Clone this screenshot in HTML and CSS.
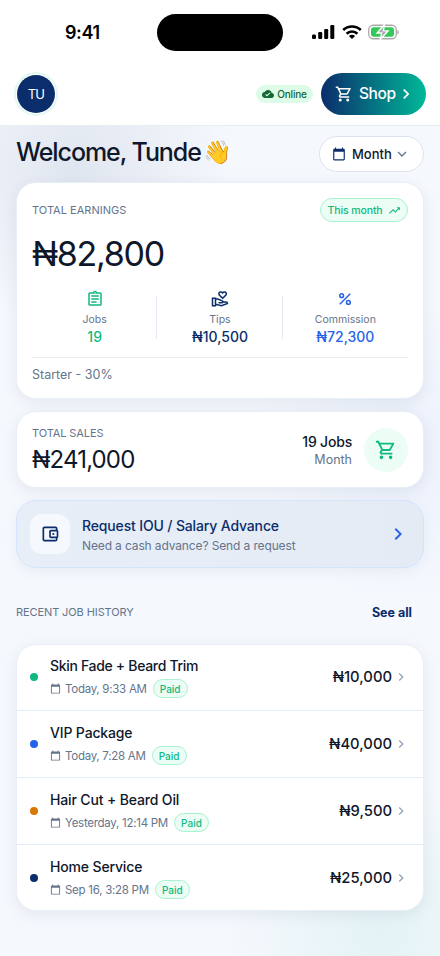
FILE: index.html
```html
<!DOCTYPE html>
<html lang="en">
<head>
<meta charset="utf-8">
<title>Dashboard</title>
<link rel="stylesheet" href="styles.css">
</head>
<body>
<svg class="defs" width="0" height="0" aria-hidden="true">
  <symbol id="cart" viewBox="0 0 24 24"><path fill="currentColor" d="M15.55 13c.75 0 1.41-.41 1.75-1.03l3.58-6.49A1 1 0 0 0 20.01 4H5.21l-.94-2H1v2h2l3.6 7.59-1.35 2.44C4.52 15.37 5.48 17 7 17h12v-2H7l1.1-2h7.45zM6.16 6h12.15l-2.76 5H8.53L6.16 6zM7 18a2 2 0 1 0 0 4 2 2 0 0 0 0-4zm10 0a2 2 0 1 0 0 4 2 2 0 0 0 0-4z"/></symbol>
  <symbol id="chevron" viewBox="0 0 24 24"><path fill="currentColor" d="M8.6 16.6 13.2 12 8.6 7.4 10 6l6 6-6 6z"/></symbol>
  <symbol id="calendar" viewBox="0 0 24 24"><path fill="currentColor" d="M20 3h-1V1h-2v2H7V1H5v2H4a2 2 0 0 0-2 2v16c0 1.100.9 2 2 2h16a2 2 0 0 0 2-2V5a2 2 0 0 0-2-2zm0 18H4V8h16v13z"/></symbol>
</svg>

<div class="statusbar">
  <span class="time">9:41</span>
  <span class="island"></span>
  <span class="indicators">
    <svg width="23" height="15" viewBox="0 0 23 15"><rect x="0" y="9.500" width="4" height="4.500" rx="1.200"/><rect x="6.200" y="7" width="4" height="7" rx="1.200"/><rect x="12.200" y="4" width="4" height="10" rx="1.200"/><rect x="18.300" y="0" width="4" height="14" rx="1.200"/></svg>
    <svg width="20" height="15" viewBox="0 0 20 15" fill="none" stroke="#000" stroke-width="2.600"><path d="M1.200 5C6 .3 14 .3 18.800 5M4.600 8.700c3-2.900 7.800-2.900 10.800 0"/><path d="M10 14 6.900 10.900c1.700-1.600 4.500-1.600 6.200 0z" fill="#000" stroke="none"/></svg>
    <svg width="32" height="16" viewBox="0 0 32 16"><rect x=".75" y="1.250" width="27.500" height="13.500" rx="4.500" fill="none" stroke="#aaa" stroke-width="1.300"/><rect x="3" y="3.200" width="23" height="9.600" rx="2.700" fill="#34c759"/><path d="M29.500 6v4.500c1.600-.6 1.600-3.900 0-4.500z" fill="#999"/><path d="M16.500 .5 9 9h4.700l-1.500 6.500 8-8.700h-4.800z" fill="#aaa" stroke="#fff" stroke-width="1.300"/></svg>
  </span>
</div>

<header class="topbar">
  <div class="avatar">TU</div>
  <div class="online">
    <svg width="12" height="12" viewBox="0 0 24 24"><path fill="currentColor" d="M19.350 10.040A7.490 7.490 0 0 0 12 4C9.110 4 6.600 5.640 5.350 8.040A5.990 5.990 0 0 0 0 14c0 3.310 2.690 6 6 6h13c2.760 0 5-2.240 5-5 0-2.640-2.050-4.780-4.650-4.960zM10 17l-3.500-3.500 1.410-1.410L10 14.180l5.180-5.180 1.410 1.410L10 17z"/></svg>
    <span>Online</span>
  </div>
  <div class="shop">
    <svg width="18" height="18"><use href="#cart"/></svg>
    <span>Shop</span>
    <svg width="20" height="20"><use href="#chevron"/></svg>
  </div>
</header>

<main>
  <section class="welcome">
    <h1>Welcome, Tunde</h1><span class="wave">👋</span>
    <div class="period">
      <svg width="14" height="14"><use href="#calendar"/></svg>
      <span>Month</span>
      <svg width="10" height="10" viewBox="0 0 10 10" fill="none" stroke="#64748b" stroke-width="1.300"><path d="m1 3 4 4 4-4"/></svg>
    </div>
  </section>

  <section class="card earnings">
    <div class="earn-head"><span class="label">TOTAL EARNINGS</span>
      <span class="trend"><span>This month</span><svg width="13" height="13" viewBox="0 0 24 24"><path fill="currentColor" d="m16 6 2.290 2.290-4.880 4.880-4-4L2 16.590 3.410 18l6-6 4 4 6.300-6.290L22 12V6z"/></svg></span>
    </div>
    <div class="total">₦82,800</div>
    <div class="stats">
      <div class="stat green"><svg width="18" height="18" viewBox="0 0 24 24"><path fill="currentColor" d="M7 15h7v2H7zm0-4h10v2H7zm0-4h10v2H7zm12-4h-4.180a3 3 0 0 0-5.640 0H5a2 2 0 0 0-2 2v14c0 1.100.9 2 2 2h14a2 2 0 0 0 2-2V5a2 2 0 0 0-2-2zm-7-.25a.75.75 0 1 1 0 1.500.75.75 0 0 1 0-1.500zM19 19H5V5h14v14z"/></svg><span>Jobs</span><b>19</b></div>
      <div class="stat navy"><svg width="18" height="18" viewBox="0 0 24 24" fill="none" stroke="currentColor" stroke-width="2"><path d="M2 11h4v10H2zM6 12h3l6 2.500c1.500.8.8 2.500-.5 2.500H10M14.500 16H20c1.500 0 2 1 2 2l-8 3-8-2M15.500 11c-2.500-2.200-5-4.100-5-6 0-2.700 3.500-3.300 5-1.100 1.500-2.200 5-1.600 5 1.100 0 1.900-2.500 3.800-5 6z"/></svg><span>Tips</span><b>₦10,500</b></div>
      <div class="stat blue"><svg width="18" height="18" viewBox="0 0 24 24" fill="none" stroke="currentColor" stroke-width="2"><circle cx="7.500" cy="7.500" r="2.500"/><circle cx="16.500" cy="16.500" r="2.500"/><path d="M19 5 5 19"/></svg><span>Commission</span><b>₦72,300</b></div>
    </div>
    <div class="plan">Starter - 30%</div>
  </section>

  <section class="card sales">
    <div class="sales-main"><div class="label tight">TOTAL SALES</div><div class="sales-total">₦241,000</div></div>
    <div class="sales-side"><div class="jobs">19 Jobs</div><div class="month">Month</div></div>
    <div class="cart-circle"><svg width="22" height="22"><use href="#cart"/></svg></div>
  </section>

  <section class="advance">
    <div class="wallet"><svg width="20" height="20" viewBox="0 0 24 24" fill="none" stroke="currentColor" stroke-width="2"><path d="M20 8V5.500a1.500 1.500 0 0 0-1.500-1.500h-13A1.500 1.500 0 0 0 4 5.500v13A1.500 1.500 0 0 0 5.500 20h13a1.500 1.500 0 0 0 1.500-1.500V16"/><rect x="12" y="8" width="9" height="8" rx="1"/><circle cx="16" cy="12" r="1.300" fill="currentColor" stroke="none"/></svg></div>
    <div class="advance-text"><div class="advance-title">Request IOU / Salary Advance</div><div class="advance-sub">Need a cash advance? Send a request</div></div>
    <svg class="go" width="24" height="24"><use href="#chevron"/></svg>
  </section>

  <div class="history-head"><span class="label tight">RECENT JOB HISTORY</span><a>See all</a></div>

  <section class="card history">
    <div class="job">
      <i class="dot emerald"></i>
      <div class="job-main"><div class="job-name snug">Skin Fade + Beard Trim</div><div class="job-meta"><svg width="11" height="11"><use href="#calendar"/></svg><span class="when">Today, 9:33 AM</span><span class="paid">Paid</span></div></div>
      <div class="amount">₦10,000</div><svg class="more" width="16" height="16"><use href="#chevron"/></svg>
    </div>
    <div class="job">
      <i class="dot royal"></i>
      <div class="job-main"><div class="job-name">VIP Package</div><div class="job-meta"><svg width="11" height="11"><use href="#calendar"/></svg><span class="when">Today, 7:28 AM</span><span class="paid">Paid</span></div></div>
      <div class="amount">₦40,000</div><svg class="more" width="16" height="16"><use href="#chevron"/></svg>
    </div>
    <div class="job">
      <i class="dot amber"></i>
      <div class="job-main"><div class="job-name">Hair Cut + Beard Oil</div><div class="job-meta"><svg width="11" height="11"><use href="#calendar"/></svg><span class="when">Yesterday, 12:14 PM</span><span class="paid">Paid</span></div></div>
      <div class="amount">₦9,500</div><svg class="more" width="16" height="16"><use href="#chevron"/></svg>
    </div>
    <div class="job">
      <i class="dot deep"></i>
      <div class="job-main"><div class="job-name">Home Service</div><div class="job-meta"><svg width="11" height="11"><use href="#calendar"/></svg><span class="when">Sep 16, 3:28 PM</span><span class="paid">Paid</span></div></div>
      <div class="amount">₦25,000</div><svg class="more" width="16" height="16"><use href="#chevron"/></svg>
    </div>
  </section>
</main>
</body>
</html>
```
FILE: styles.css
```css
* { box-sizing: border-box; }
body {
  margin: 0;
  width: 440px;
  height: 956px;
  overflow: hidden;
  color: #0f172a;
  font-family: Inter, "Noto Sans", sans-serif;
  background:
    radial-gradient(circle at 75px 170px, rgba(10, 45, 105, .09), transparent 160px),
    radial-gradient(circle at 400px 450px, rgba(37, 99, 235, .05), transparent 150px),
    radial-gradient(circle at 380px 930px, rgba(16, 185, 150, .08), transparent 150px),
    #f5f8fd;
}
svg { display: block; flex: none; }
.defs { position: absolute; }
span, div, h1, a { white-space: nowrap; }

.statusbar { height: 62px; background: #fff; display: flex; align-items: flex-start; }
.time { width: 157px; padding-left: 65px; margin-top: 22px; font-size: 18px; line-height: 22px; font-weight: 600; color: #000; letter-spacing: -.4px; }
.island { width: 126px; height: 37px; margin-top: 14px; border-radius: 19px; background: #000; }
.indicators { display: flex; align-items: center; gap: 6.500px; margin: 24px 0 0 29px; }

.topbar { height: 64px; padding: 0 14px; background: #fff; border-bottom: 1px solid #e8edf4; display: flex; align-items: center; }
.avatar { width: 44px; height: 44px; border: 2px solid #e3f8f4; border-radius: 50%; padding: 1px; background: #0b2d6b content-box; background-clip: content-box; color: #fff; font-size: 13px; letter-spacing: -.9px; display: grid; place-items: center; }
.online { margin-left: auto; width: 57px; height: 18px; border-radius: 9px; background: #dcfce7; color: #166534; display: flex; align-items: center; justify-content: center; gap: 3px; font-size: 10px; letter-spacing: -.2px; font-weight: 450; }
.shop { margin-left: 8px; width: 105px; height: 42px; border-radius: 21px; background: linear-gradient(90deg, #0b2d6b, #00b899); color: #fff; display: flex; align-items: center; padding-left: 14px; font-size: 15.500px; letter-spacing: -.4px; font-weight: 450; }
.shop span { margin: 0 1px 0 6px; width: 36px; }

main { padding: 0 16px; }
.welcome { height: 56px; display: flex; align-items: center; }
h1 { margin: 0 0 4px; width: 184px; font-size: 25px; line-height: 30px; font-weight: 450; letter-spacing: -1.080px; }
.wave { margin: 0 0 4px 3px; width: 28px; font-size: 23px; line-height: 30px; }
.period { margin-left: auto; width: 105px; height: 36px; border: 1px solid #dde4ee; border-radius: 18px; background: #fff; display: flex; align-items: center; padding-left: 12px; font-size: 13px; font-weight: 450; }
.period svg:first-child { color: #0b2d6b; }
.period span { width: 39px; margin: 0 6px; }

.card { background: #fff; border: 1px solid #e9eff6; border-radius: 20px; box-shadow: 0 4px 16px rgba(15, 35, 70, .07); }
.label { font-size: 11px; line-height: 14px; letter-spacing: .02px; color: #64748b; }
.label.tight { letter-spacing: -.1px; }
.earnings { height: 217px; padding: 15px; }
.earn-head { height: 24px; display: flex; justify-content: space-between; align-items: center; }
.trend { width: 88px; height: 24px; border: 1px solid #a7f3d0; border-radius: 12px; background: #ecfdf5; color: #10b981; display: flex; align-items: center; justify-content: center; gap: 5px; font-size: 10.500px; letter-spacing: -.1px; font-weight: 450; }
.total { margin-top: 10px; height: 44px; font-size: 34px; line-height: 44px; font-weight: 420; letter-spacing: -1.300px; }
.stats { display: grid; grid-template-columns: repeat(3, 1fr); margin-top: 14px; height: 57px; }
.stat { position: relative; display: flex; flex-direction: column; align-items: center; }
.stat + .stat::before { content: ""; position: absolute; left: -1px; top: 6px; width: 1px; height: 43px; background: #e2e8f0; }
.stat span { margin-top: 5px; font-size: 10.500px; line-height: 14px; color: #64748b; }
.stat b { margin-top: 1px; font-size: 14px; line-height: 17px; font-weight: 450; }
.green { color: #10b981; }
.navy { color: #0b2d6b; }
.blue { color: #2563eb; }
.plan { margin-top: 10px; border-top: 1px solid #e5edf2; padding-top: 8px; font-size: 12.500px; line-height: 18px; color: #64748b; }

.sales { margin-top: 12px; height: 77px; padding: 0 15px; display: flex; align-items: center; }
.sales-main { padding-top: 1px; }
.sales-total { margin-top: 5px; font-size: 24px; line-height: 30px; font-weight: 420; letter-spacing: -.850px; }
.sales-side { margin-left: auto; padding-top: 1px; text-align: right; }
.jobs { font-size: 14px; line-height: 19px; font-weight: 450; letter-spacing: -.2px; }
.month { font-size: 12.500px; line-height: 17px; color: #64748b; }
.cart-circle { width: 44px; height: 44px; border-radius: 50%; margin-left: 12px; background: #ecfdf5; color: #10b981; display: grid; place-items: center; }

.advance { margin-top: 12px; height: 68px; border: 1px solid #d3e4fc; border-radius: 20px; background: linear-gradient(90deg, #e7eef8, #e4ebf5); box-shadow: 0 4px 14px rgba(15, 35, 70, .05); display: flex; align-items: center; padding: 0 13px; color: #0b2d6b; }
.wallet { width: 40px; height: 40px; border-radius: 12px; background: #f5f9fd; display: grid; place-items: center; }
.advance-text { margin-left: 12px; padding-top: 2px; }
.advance-title { font-size: 14px; line-height: 19px; font-weight: 450; letter-spacing: -.150px; }
.advance-sub { margin-top: 2px; font-size: 12px; line-height: 17px; color: #64748b; letter-spacing: -.130px; }
.go { margin-left: auto; color: #2563eb; }

.history-head { height: 88px; padding-right: 12px; display: flex; align-items: center; justify-content: space-between; }
.history-head a { font-size: 12.500px; font-weight: 700; color: #0b2d6b; }
.history { height: 267px; margin-top: -12px; overflow: hidden; }
.job { height: 67px; padding: 0 13px; border-bottom: 1px solid #e4edf5; display: flex; align-items: center; }
.job:first-child { margin-top: -1px; }
.job:last-child { border-bottom-color: transparent; }
.dot { width: 8px; height: 8px; border-radius: 50%; }
.emerald { background: #10b981; }
.royal { background: #2563eb; }
.amber { background: #d97706; }
.deep { background: #0b2d6b; }
.job-main { margin-left: 12px; }
.job-name { font-size: 14px; line-height: 20px; font-weight: 450; letter-spacing: -.150px; }
.job-name.snug { letter-spacing: -.320px; }
.job-meta { margin-top: 3px; height: 19px; display: flex; align-items: center; color: #64748b; font-size: 11.500px; }
.when { margin: 0 6px 0 4px; letter-spacing: -.270px; }
.paid { width: 35px; height: 19px; border: 1px solid #a7f3d0; border-radius: 10px; background: #ecfdf5; color: #10b981; display: grid; place-items: center; font-size: 10px; font-weight: 450; }
.amount { margin-left: auto; font-size: 14.800px; font-weight: 450; }
.more { margin: 0 1px; color: #94a3b8; }
```
